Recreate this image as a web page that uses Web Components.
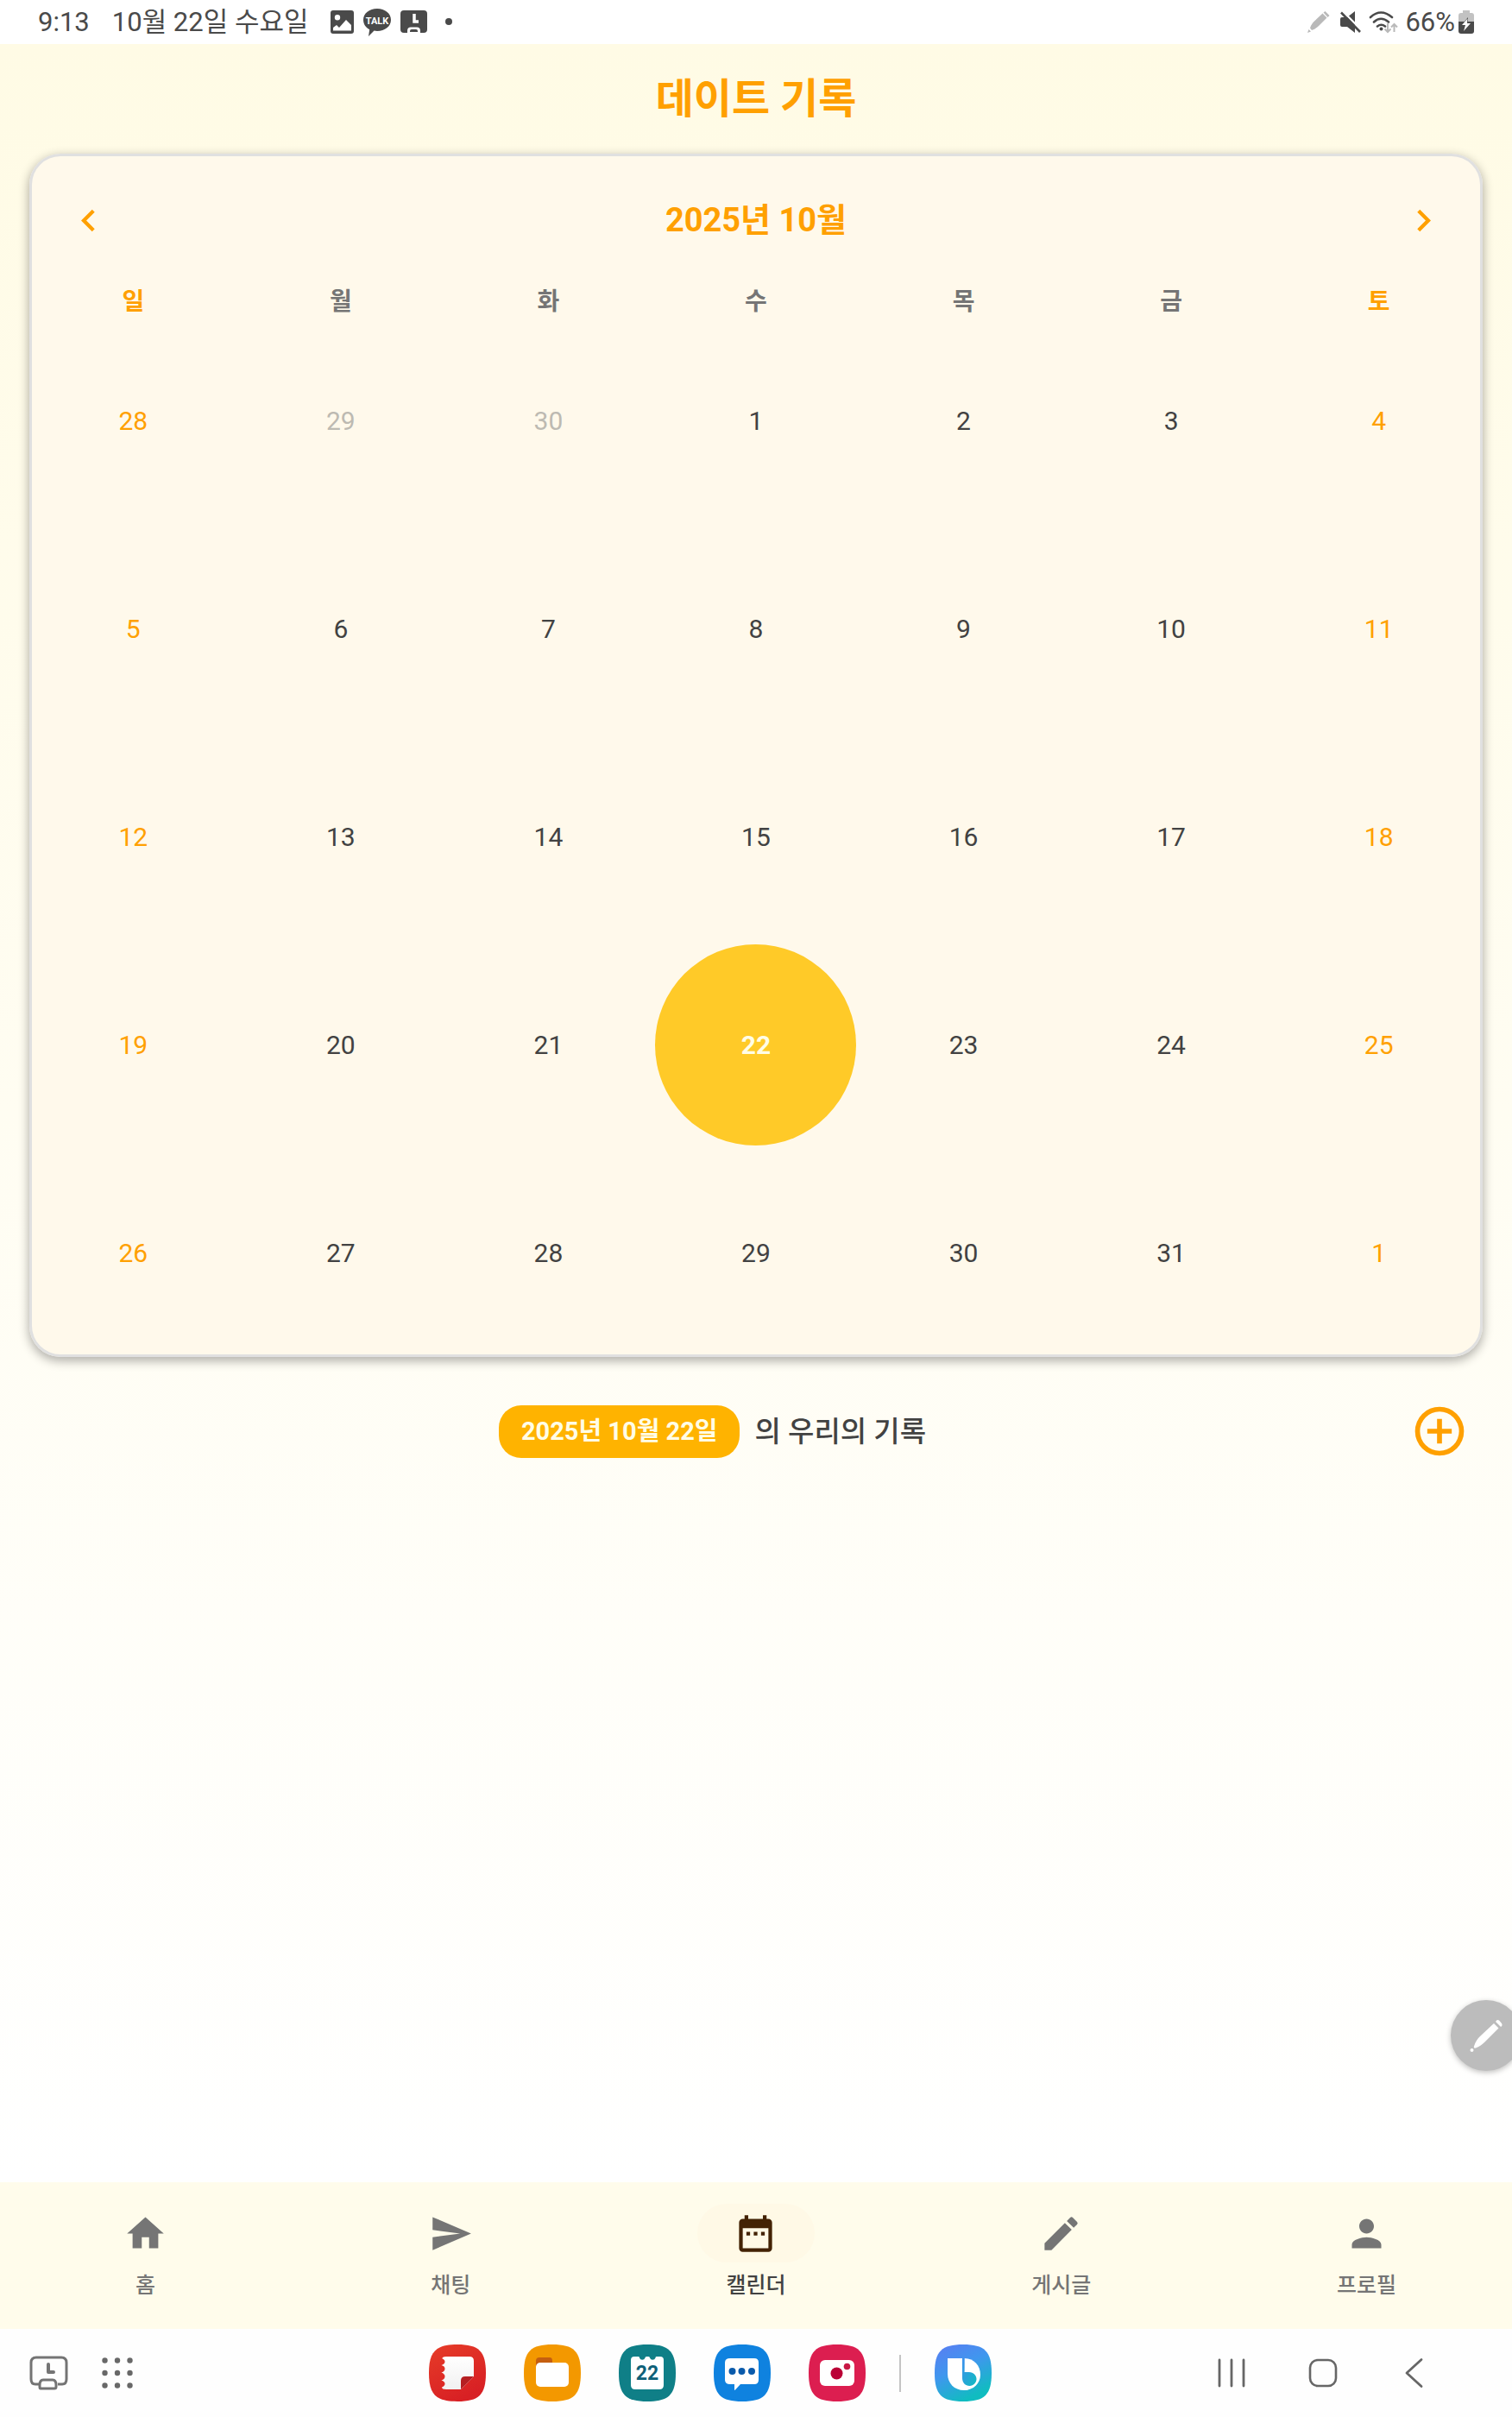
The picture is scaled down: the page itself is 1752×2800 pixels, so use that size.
<!DOCTYPE html>
<html lang="ko">
<head>
<meta charset="utf-8">
<meta name="viewport" content="width=device-width, initial-scale=1">
<title>데이트 기록</title>
<style>
  html, body { margin: 0; }
  body { font-family: Roboto, "Noto Sans CJK KR", sans-serif; color: #424242; background: #fff; }
</style>
</head>
<body>
<date-app></date-app>

<template id="t-date-app">
  <style>
    :host { display: flex; flex-direction: column; min-height: 100vh; position: relative; overflow: hidden; }
    main { flex: 1; display: flex; flex-direction: column; background: linear-gradient(#fffbe5, #ffffff); }
    h1 { margin: 0; height: 127px; line-height: 128px; text-align: center; font-size: 48px; font-weight: 700; color: #ffa000; }
    month-calendar { margin: 0 34px; }
    record-bar { margin-top: 35px; padding: 0 33px 0 34px; }
    pen-handle { position: absolute; right: -11px; bottom: 401px; }
  </style>
  <status-bar></status-bar>
  <main>
    <h1>데이트 기록</h1>
    <month-calendar></month-calendar>
    <record-bar date="2025년 10월 22일">의 우리의 기록</record-bar>
  </main>
  <bottom-nav></bottom-nav>
  <task-bar></task-bar>
  <pen-handle></pen-handle>
</template>

<template id="t-status-bar">
  <style>
    :host { display: flex; align-items: center; justify-content: space-between; height: 51px; padding: 0 44px; background: #fff; color: #4a4a4a; font-size: 31px; line-height: 51px; box-sizing: border-box; }
    div { display: flex; align-items: center; }
    .date { margin: 0 26px; }
    .notes { gap: 11px; }
    .state { gap: 8px; }
    .battery { gap: 4px; }
    svg { display: block; }
  </style>
  <div>
    <time>9:13</time><span class="date">10월 22일 수요일</span>
    <div class="notes">
      <svg width="27" height="27" viewBox="0 0 27 27"><path fill="#4a4a4a" fill-rule="evenodd" d="M3 0h21a3 3 0 0 1 3 3v21a3 3 0 0 1-3 3H3a3 3 0 0 1-3-3V3a3 3 0 0 1 3-3zM8 5a3.200 3.200 0 1 0 0 6.400A3.200 3.200 0 0 0 8 5zM3 20v3.500h21V17l-6-6-8 9-3-3z"/></svg>
      <svg width="32" height="34" viewBox="0 0 32 34"><path fill="#4a4a4a" d="M16 1C7 1 0 6.500 0 14c0 5 3 9 7.200 11.300L6 33l6.500-6.400c1 .2 2.300.4 3.500.4 9 0 16-5.500 16-13S25 1 16 1z"/><text x="16" y="19" text-anchor="middle" font-family="Roboto, sans-serif" font-size="11" font-weight="700" fill="#fff">TALK</text></svg>
      <svg width="31" height="29" viewBox="0 0 31 29"><rect y="1" width="31" height="26" rx="4" fill="#4a4a4a"/><path d="M16 5v9h5" fill="none" stroke="#fff" stroke-width="3.500"/><path d="M8 28.500v-4c0-2.500 1.500-4 4-4h7c2.500 0 4 1.500 4 4v4z" fill="#fff"/><path d="M11 26v-1q0-2 2-2h5q2 0 2 2v1z" fill="#4a4a4a"/></svg>
      <svg width="28" height="27" viewBox="0 0 28 27"><circle cx="14" cy="13" r="4" fill="#4a4a4a"/></svg>
    </div>
  </div>
  <div class="state">
    <svg width="29" height="27" viewBox="0 0 29 27"><path fill="#b9b9b9" d="M0 26l1.500-4 2.500 2.500zM3 20.500C4 17 6 14.500 8 12.500L17.500 3.500l5 5L13 18c-2.500 2.200-5 4-8 5zM18.500 2.500L20.500 1l5 5-2 2z"/></svg>
    <svg width="26" height="27" viewBox="0 0 26 27"><path fill="#4a4a4a" d="M3 8h6l9-7v25l-9-7H3q-2 0-2-2v-7q0-2 2-2z"/><path d="M4 1l22 22.500" stroke="#fff" stroke-width="2.500"/><path d="M2 2.500L24 25" stroke="#4a4a4a" stroke-width="2.600"/></svg>
    <svg width="34" height="28" viewBox="0 0 34 28"><g fill="none" stroke="#4a4a4a" stroke-width="2.600" stroke-linecap="round"><path d="M2 8q12-11 25 0M6 13.500q8-7.500 17 0M10 18.500q4.500-3.500 9 0"/></g><circle cx="14.500" cy="21.500" r="2" fill="#4a4a4a"/><g fill="none" stroke="#b9b9b9" stroke-width="2"><path d="M22 15v10M18.500 21.500L22 25l3.500-3.500M29.500 25V16M26 19.500l3.500-3.500 3.500 3.500"/></g></svg>
    <div class="battery"><span>66%</span>
      <svg width="18" height="27" viewBox="0 0 18 27"><path fill="#c2c2c2" d="M5 0h8v3h2a3 3 0 0 1 3 3v7H0V6a3 3 0 0 1 3-3h2z"/><path fill="#4a4a4a" d="M0 13h18v11a3 3 0 0 1-3 3H3a3 3 0 0 1-3-3z"/><path fill="#4a4a4a" d="M11 8l-4 5h4z"/><path fill="#fff" d="M10.500 9.500L4 17h4l-2 7 8-9h-4z"/></svg></div>
  </div>
</template>

<template id="t-month-calendar">
  <style>
    :host { display: block; border-radius: 36px; background: #fff9eb; box-shadow: inset 0 0 0 3px #e0e0e0, 0 4px 12px 1px rgba(0, 0, 0, .3); }
    header { display: flex; align-items: center; justify-content: space-between; height: 155px; padding: 0 43px; }
    h2 { margin: 0; font-size: 38px; line-height: 51px; font-weight: 700; color: #ffa000; }
    header button { width: 51px; height: 51px; }
    button { border: 0; padding: 0; background: none; font: inherit; color: inherit; display: block; cursor: pointer; }
    svg { display: block; fill: #ffa000; }
    table { width: 100%; table-layout: fixed; border-collapse: collapse; }
    th { height: 34px; padding: 0; font-size: 28px; line-height: 34px; font-weight: 700; color: #757575; }
    td { height: 241px; padding: 0; font-size: 30px; line-height: 36px; }
    td button { width: 233px; height: 233px; margin: 0 auto; border-radius: 50%; }
    .out { color: #bdbab2; }
    .rest { color: #ffa000; }
    td .selected { background: #ffca28; color: #fffde7; font-weight: 700; }
  </style>
  <header>
    <button aria-label="이전 달"><svg width="51" height="51" viewBox="0 0 24 24"><path d="M15.410 7.410L14 6l-6 6 6 6 1.410-1.410L10.830 12z"/></svg></button>
    <h2>2025년 10월</h2>
    <button aria-label="다음 달"><svg width="51" height="51" viewBox="0 0 24 24"><path d="M10 6L8.590 7.410 13.170 12l-4.580 4.590L10 18l6-6z"/></svg></button>
  </header>
  <table><thead><tr></tr></thead><tbody></tbody></table>
</template>

<template id="t-record-bar">
  <style>
    :host { display: flex; align-items: center; height: 102px; }
    p { flex: 1; margin: 0; display: flex; align-items: center; justify-content: center; gap: 17px; font-size: 33px; line-height: 61px; font-weight: 500; }
    .pill { padding: 0 26px; border-radius: 26px; background: #ffb300; color: #fffde7; font-size: 29px; font-weight: 700; }
    button { border: 0; padding: 17px; background: none; cursor: pointer; }
    svg { display: block; fill: #ffa000; }
  </style>
  <p><span class="pill"></span><span><slot></slot></span></p>
  <button aria-label="기록 추가"><svg width="68" height="68" viewBox="0 0 24 24"><path d="M13 7h-2v4H7v2h4v4h2v-4h4v-2h-4zM12 2a10 10 0 1 0 0 20 10 10 0 0 0 0-20zm0 18a8 8 0 1 1 0-16 8 8 0 0 1 0 16z"/></svg></button>
</template>

<template id="t-bottom-nav">
  <style>
    :host { display: block; background: #fffceb; }
    nav { display: flex; gap: 17px; height: 170px; }
    nav-item { flex: 1; }
  </style>
  <nav aria-label="메뉴">
    <nav-item label="홈"><svg viewBox="0 0 24 24"><path d="M10 20v-6h4v6h5v-8h3L12 3 2 12h3v8z"/></svg></nav-item>
    <nav-item label="채팅"><svg viewBox="0 0 24 24"><path d="M2.010 21L23 12 2.010 3 2 10l15 2-15 2z"/></svg></nav-item>
    <nav-item label="캘린더" active><svg viewBox="0 0 24 24"><path d="M9 11H7v2h2zm4 0h-2v2h2zm4 0h-2v2h2zm2-7h-1V2h-2v2H8V2H6v2H5c-1.110 0-2 .9-2 2v14c0 1.100.89 2 2 2h14c1.100 0 2-.9 2-2V6c0-1.100-.9-2-2-2zm0 16H5V9h14z"/></svg></nav-item>
    <nav-item label="게시글"><svg viewBox="0 0 24 24"><path d="M3 17.250V21h3.750L17.810 9.940l-3.750-3.750zM20.710 7.040a1 1 0 0 0 0-1.410l-2.340-2.340a1 1 0 0 0-1.410 0l-1.830 1.830 3.750 3.750z"/></svg></nav-item>
    <nav-item label="프로필"><svg viewBox="0 0 24 24"><path d="M12 12c2.210 0 4-1.790 4-4s-1.790-4-4-4-4 1.790-4 4 1.790 4 4 4zm0 2c-2.670 0-8 1.340-8 4v2h16v-2c0-2.660-5.330-4-8-4z"/></svg></nav-item>
  </nav>
</template>

<template id="t-nav-item">
  <style>
    :host { display: block; color: #757575; }
    a { display: flex; flex-direction: column; align-items: center; gap: 10px; padding-top: 25px; color: inherit; text-decoration: none; font-size: 25px; line-height: 34px; font-weight: 500; }
    i { display: flex; align-items: center; justify-content: center; width: 136px; height: 68px; border-radius: 34px; }
    ::slotted(svg) { display: block; width: 51px; height: 51px; fill: #757575; }
    :host([active]) { color: #424242; }
    :host([active]) i { background: #fff9e6; }
    :host([active]) ::slotted(svg) { fill: #432204; }
  </style>
  <a href="#"><i><slot></slot></i><span></span></a>
</template>

<template id="t-task-bar">
  <style>
    :host { display: grid; grid-template-columns: 1fr auto 1fr; align-items: center; height: 102px; background: #fefefe; padding: 0 32px; }
    div { display: flex; align-items: center; }
    .left { gap: 38px; }
    .apps { gap: 44px; margin-right: 107px; }
    .keys { justify-content: flex-end; gap: 70px; padding-right: 63px; }
    hr { width: 2px; height: 43px; margin: 0 -5px; border: 0; background: #c4c4c4; }
    button { border: 0; padding: 0; background: none; display: block; cursor: pointer; }
    svg { display: block; }
  </style>
  <div class="left">
    <button aria-label="최근 앱"><svg width="48" height="40" viewBox="0 0 48 40"><g fill="none" stroke="#747474" stroke-width="3" stroke-linejoin="round"><path d="M14 33H9q-5 0-5-6V8q0-6 6-6h29q6 0 6 6v19q0 6-5 6h-5"/><path d="M15 38q-1 0-1-2v-2q0-6 4-6h11q4 0 4 6v2q0 2-2 2z"/><path stroke-width="4" stroke-linecap="round" d="M24 10v9h6"/></g></svg></button>
    <button aria-label="모든 앱"><svg width="36" height="36" viewBox="0 0 36 36" fill="#686868"><circle cx="3.500" cy="3.500" r="3.200"/><circle cx="18" cy="3.500" r="3.200"/><circle cx="32.500" cy="3.500" r="3.200"/><circle cx="3.500" cy="18" r="3.200"/><circle cx="18" cy="18" r="3.200"/><circle cx="32.500" cy="18" r="3.200"/><circle cx="3.500" cy="32.500" r="3.200"/><circle cx="18" cy="32.500" r="3.200"/><circle cx="32.500" cy="32.500" r="3.200"/></svg></button>
  </div>
  <div class="apps">
    <app-icon label="노트" from="#e63c28" to="#d82024"><svg viewBox="0 0 66 66"><defs><linearGradient id="n" x2="0" y2="1"><stop stop-color="#fff"/><stop offset="1" stop-color="#f1f1f1"/></linearGradient></defs><path fill="url(#n)" d="M20 14h27q5 0 5 5v18L37 52H20q-5 0-5-2.500 3.500-1.500 3.500-4t-4-4q4-1.500 4-4.500t-4-4.500q4-1.500 4-4.500t-4-4q4-1.500 4-4t-3-3.500Q15 14 20 14z"/><path fill="#b51f22" d="M37 52V42q0-5 5-5h10z"/></svg></app-icon>
    <app-icon label="내 파일" from="#f39800" to="#f39800"><svg viewBox="0 0 66 66"><path fill="#c55f10" d="M14 25v-6q0-4 4-4h12q3 0 3 4v6z"/><rect x="14" y="21" width="38" height="28" rx="5" fill="#fff"/></svg></app-icon>
    <app-icon label="캘린더" from="#0f7f87" to="#0f7f87"><svg viewBox="0 0 66 66"><path fill="#fff" d="M18 14h5q1 0 1 1.500a3.500 3.500 0 0 0 6.500 0Q30.500 14 32 14h2.500q1.500 0 1.500 1.500a3.500 3.500 0 0 0 6.500 0Q42.500 14 43.500 14H48q4 0 4 4v29q0 5-5 5H19q-5 0-5-5V18q0-4 4-4z"/><text x="33" y="41" text-anchor="middle" font-family="Roboto, sans-serif" font-size="23" font-weight="700" fill="#0e6078">22</text></svg></app-icon>
    <app-icon label="메시지" from="#0f82df" to="#0f82df"><svg viewBox="0 0 66 66"><path fill="#fff" d="M19 16h28q5 0 5 5v20q0 5-5 5H31l-6.500 7q-.5 0-.5-1v-6h-5q-6 0-6-5V21q0-5 6-5z"/><g fill="#0a5aab"><circle cx="21.500" cy="31" r="4"/><circle cx="32.500" cy="31" r="4"/><circle cx="44" cy="31" r="4"/></g></svg></app-icon>
    <app-icon label="카메라" from="#dc1e50" to="#dc1e50"><svg viewBox="0 0 66 66"><rect x="13" y="18" width="40" height="30" rx="6" fill="#fff"/><circle cx="32.500" cy="33.500" r="7" fill="#ba0036"/><circle cx="44.500" cy="25.500" r="3.800" fill="#c81745"/></svg></app-icon>
    <hr>
    <app-icon label="빅스비" from="#5b7cf2" mid="#3f97ee" to="#10bcc0"><svg viewBox="0 0 66 66"><defs><linearGradient id="b" x2="1" y2="1"><stop stop-color="#3d8fee"/><stop offset="1" stop-color="#10bcc0"/></linearGradient></defs><path fill="#fff" d="M15 16h17v17c2-2 5-2 8-1 6 2 8 8 6 13-2 5-7 8-12 8-11 0-19-8-19-19z"/><path fill="#fff" d="M34.500 16C46 16 53 25 53 35s-8 18-19 18z"/><path fill="url(#b)" d="M32 16h2.500v16H40c5 0 8.500 4 8.500 8s-3.500 8-8 8c-5 0-8.500-4-8.500-9z"/></svg></app-icon>
  </div>
  <div class="keys">
    <button aria-label="최근"><svg width="36" height="36" viewBox="0 0 36 36"><path d="M4 3v30M18 3v30M32 3v30" stroke="#666" stroke-width="2.800" stroke-linecap="round"/></svg></button>
    <button aria-label="홈 화면"><svg width="36" height="36" viewBox="0 0 36 36"><rect x="3" y="3" width="30" height="30" rx="9" fill="none" stroke="#666" stroke-width="2.600"/></svg></button>
    <button aria-label="뒤로"><svg width="36" height="36" viewBox="0 0 36 36"><path d="M26 2.500L9 18l17 15.500" fill="none" stroke="#666" stroke-width="2.800" stroke-linecap="round" stroke-linejoin="round"/></svg></button>
  </div>
</template>

<template id="t-app-icon">
  <style>
    :host { display: block; }
    button { display: grid; border: 0; padding: 0; background: none; width: 66px; height: 66px; cursor: pointer; }
    svg, ::slotted(svg) { grid-area: 1 / 1; display: block; width: 66px; height: 66px; }
  </style>
  <button><svg viewBox="0 0 66 66"><defs><linearGradient id="g" x2=".5" y2="1"><stop/><stop offset=".5"/><stop offset="1"/></linearGradient></defs><path fill="url(#g)" d="M33 0C58 0 66 8 66 33S58 66 33 66 0 58 0 33 8 0 33 0z"/></svg><slot></slot></button>
</template>

<template id="t-pen-handle">
  <style>
    :host { display: block; }
    button { display: grid; place-items: center; width: 82px; height: 82px; padding: 0; border: 0; border-radius: 50%; background: #bcbcbc; box-shadow: 0 2px 6px rgba(0, 0, 0, .25); cursor: pointer; }
    svg { display: block; }
  </style>
  <button aria-label="S펜"><svg width="40" height="40" viewBox="0 0 40 40" fill="#fff"><circle cx="3.500" cy="37" r="2"/><path d="M6 32.500c1.500-5 4-8.500 7-11.500L29 6l5.500 5.500L18 28c-3 3-6 5-10 6.500-2 .5-2.500-.5-2-2z"/><path d="M31 4q1.500-3 4-1.500l3 3.500q1.500 2.500-1 4z"/></svg></button>
</template>

<script>
  const define = (name, setup) => customElements.define(name, class extends HTMLElement {
    constructor() {
      super();
      this.attachShadow({ mode: 'open' }).append(document.getElementById('t-' + name).content.cloneNode(true));
    }
    connectedCallback() { if (setup) setup(this, this.shadowRoot); }
  });

  define('status-bar');

  define('month-calendar', (host, root) => {
    const head = root.querySelector('thead tr');
    const body = root.querySelector('tbody');
    head.replaceChildren(...[...'일월화수목금토'].map((name, i) => {
      const th = document.createElement('th');
      th.scope = 'col';
      th.textContent = name;
      if (i % 6 === 0) th.className = 'rest';
      return th;
    }));
    body.replaceChildren();
    for (let week = 0; week < 5; week++) {
      const row = body.insertRow();
      for (let i = 0; i < 7; i++) {
        const date = new Date(2025, 8, 28 + week * 7 + i);
        const button = document.createElement('button');
        button.textContent = date.getDate();
        if (i % 6 === 0) button.className = 'rest';
        else if (date.getMonth() !== 9) button.className = 'out';
        if (date.getMonth() === 9 && date.getDate() === 22) button.className = 'selected';
        row.insertCell().append(button);
      }
    }
  });

  define('record-bar', (host, root) => {
    root.querySelector('.pill').textContent = host.getAttribute('date');
  });

  define('nav-item', (host, root) => {
    root.querySelector('span').textContent = host.getAttribute('label');
    if (host.hasAttribute('active')) root.querySelector('a').setAttribute('aria-current', 'page');
  });
  define('bottom-nav');

  define('app-icon', (host, root) => {
    const [a, m, b] = root.querySelectorAll('stop');
    const from = host.getAttribute('from'), to = host.getAttribute('to'), mid = host.getAttribute('mid');
    a.setAttribute('stop-color', from);
    b.setAttribute('stop-color', to);
    if (mid) m.setAttribute('stop-color', mid); else m.remove();
    root.querySelector('button').setAttribute('aria-label', host.getAttribute('label'));
  });
  define('task-bar');
  define('pen-handle');
  define('date-app');
</script>
</body>
</html>
